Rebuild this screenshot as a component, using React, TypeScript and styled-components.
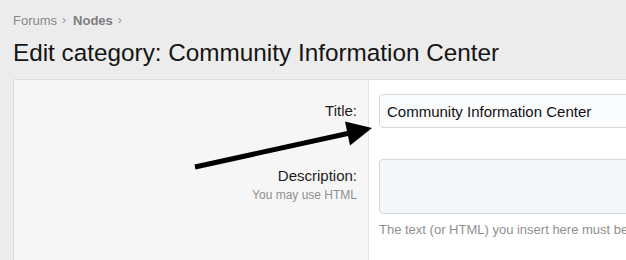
import styled, { createGlobalStyle } from 'styled-components';

const GlobalStyle = createGlobalStyle`
  html, body {
    margin: 0;
    padding: 0;
    background: #ececec;
    overflow: hidden;
  }
  body {
    font-family: 'Liberation Sans', Arial, sans-serif;
  }
`;

const Page = styled.div`
  position: relative;
  width: 1000px;
  padding: 13px 0 0 13px;
  box-sizing: border-box;
`;

const Breadcrumb = styled.div`
  display: flex;
  align-items: center;
  gap: 5px;
  height: 15px;
  font-size: 13px;
  line-height: 15px;
  color: #8a8a8a;
`;

const Crumb = styled.span<{ $current?: boolean }>`
  font-weight: ${(p) => (p.$current ? 700 : 400)};
  color: ${(p) => (p.$current ? '#7d7d7d' : '#8a8a8a')};
`;

const Chevron = styled.span`
  font-size: 12px;
  color: #9a9a9a;
  margin-right: 2px;
`;

const Heading = styled.h1`
  margin: 11px 0 0;
  font-size: 24.3px;
  font-weight: 400;
  line-height: 28px;
  color: #151515;
`;

const Panel = styled.div`
  margin-top: 12px;
  border: 1px solid #dcdcdc;
  border-right: none;
  border-radius: 3px 0 0 0;
  overflow: hidden;
`;

const Row = styled.div`
  display: grid;
  grid-template-columns: 355px 1fr;
`;

const LabelCell = styled.div<{ $top: number; $bottom: number }>`
  background: #f6f6f6;
  border-right: 1px solid #e2e2e2;
  padding: ${(p) => p.$top}px 11px ${(p) => p.$bottom}px 0;
  text-align: right;
`;

const ControlCell = styled.div<{ $top: number; $bottom: number }>`
  background: #fff;
  padding: ${(p) => p.$top}px 0 ${(p) => p.$bottom}px 10px;
`;

const Label = styled.div`
  padding-top: 8px;
  font-size: 15px;
  line-height: 18px;
  color: #1c1c1c;
`;

const LabelHint = styled.div`
  margin-top: 3px;
  font-size: 12px;
  line-height: 14px;
  color: #8f8f8f;
`;

const TextInput = styled.div`
  box-sizing: border-box;
  width: 520px;
  height: 34px;
  padding: 0 7px;
  display: flex;
  align-items: center;
  border: 1px solid #d6d6d6;
  border-radius: 4px;
  background: #fbfcfe;
  font-size: 15px;
  color: #111;
`;

const TextArea = styled.div`
  box-sizing: border-box;
  width: 520px;
  height: 55px;
  border: 1px solid #d6d6d6;
  border-radius: 4px;
  background: #f4f8fb;
`;

const Explain = styled.div`
  margin-top: 8px;
  font-size: 13px;
  line-height: 16px;
  color: #8f8f8f;
  white-space: nowrap;
`;

const Annotation = styled.svg`
  position: absolute;
  top: 0;
  left: 0;
  width: 626px;
  height: 260px;
  pointer-events: none;
`;

const Arrow = () => (
  <Annotation viewBox="0 0 626 260">
    <line x1="195" y1="167" x2="350" y2="133" stroke="#000" strokeWidth="5" />
    <polygon points="372,128 345,121.5 350,145.5" fill="#000" />
  </Annotation>
);

export default function App() {
  return (
    <>
      <GlobalStyle />
      <Page>
        <Breadcrumb>
          <Crumb>Forums</Crumb>
          <Chevron>›</Chevron>
          <Crumb $current>Nodes</Crumb>
          <Chevron>›</Chevron>
        </Breadcrumb>
        <Heading>Edit category: Community Information Center</Heading>
        <Panel>
          <Row>
            <LabelCell $top={14} $bottom={17}>
              <Label>Title:</Label>
            </LabelCell>
            <ControlCell $top={14} $bottom={17}>
              <TextInput>Community Information Center</TextInput>
            </ControlCell>
          </Row>
          <Row>
            <LabelCell $top={14} $bottom={30}>
              <Label>Description:</Label>
              <LabelHint>You may use HTML</LabelHint>
            </LabelCell>
            <ControlCell $top={14} $bottom={30}>
              <TextArea />
              <Explain>The text (or HTML) you insert here must be</Explain>
            </ControlCell>
          </Row>
        </Panel>
        <Arrow />
      </Page>
    </>
  );
}
